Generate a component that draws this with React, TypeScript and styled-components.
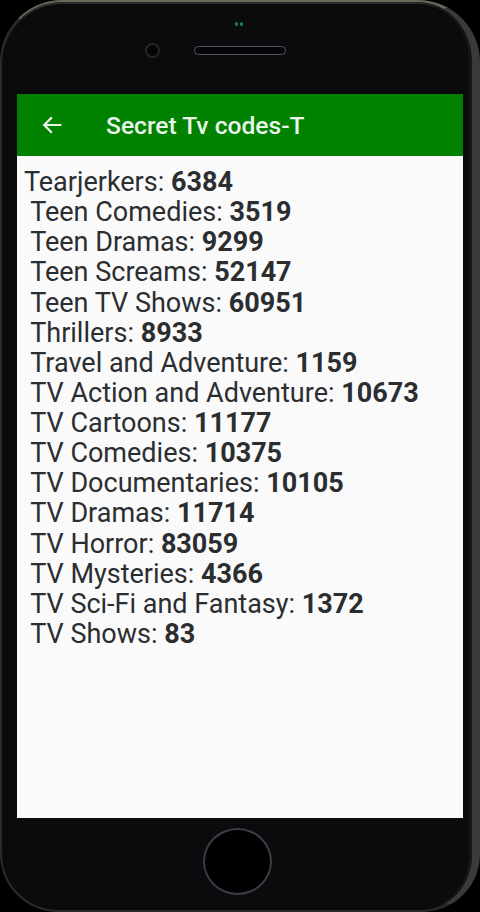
import styled, { createGlobalStyle } from 'styled-components'

const codes: [string, string][] = [
  ['Tearjerkers', '6384'],
  [' Teen Comedies', '3519'],
  [' Teen Dramas', '9299'],
  [' Teen Screams', '52147'],
  [' Teen TV Shows', '60951'],
  [' Thrillers', '8933'],
  [' Travel and Adventure', '1159'],
  [' TV Action and Adventure', '10673'],
  [' TV Cartoons', '11177'],
  [' TV Comedies', '10375'],
  [' TV Documentaries', '10105'],
  [' TV Dramas', '11714'],
  [' TV Horror', '83059'],
  [' TV Mysteries', '4366'],
  [' TV Sci-Fi and Fantasy', '1372'],
  [' TV Shows', '83'],
]

const GlobalStyle = createGlobalStyle`
  html, body {
    margin: 0;
    padding: 0;
    background: #000;
  }
  * {
    box-sizing: border-box;
  }
`

export default function App() {
  return (
    <>
      <GlobalStyle />
      <PhoneBody>
        <TopBezel>
          <SensorDots>
            <Dot />
            <Dot />
          </SensorDots>
          <EarRow>
            <Camera />
            <Speaker />
          </EarRow>
        </TopBezel>
        <Screen>
          <AppBar>
            <BackButton aria-label="back">
              <svg width="22" height="22" viewBox="0 0 24 24" fill="none" stroke="#e9f5e9" strokeWidth="2.4" strokeLinecap="square">
                <path d="M21 12H4" />
                <path d="M11 4.5 3.5 12l7.5 7.5" />
              </svg>
            </BackButton>
            <Title>Secret Tv codes-T</Title>
          </AppBar>
          <CodeList>
            {codes.map(([name, code]) => (
              <CodeRow key={name}>
                {name}: <b>{code}</b>
              </CodeRow>
            ))}
          </CodeList>
        </Screen>
        <BottomBezel>
          <HomeButton />
        </BottomBezel>
      </PhoneBody>
    </>
  )
}

const PhoneBody = styled.div`
  width: 480px;
  height: 912px;
  display: flex;
  flex-direction: column;
  background: #0b0b0d;
  border-radius: 62px 62px 58px 58px;
  border: 2px solid #2a2a2c;
  border-top-color: #6a6658;
  border-right: 8px solid #3a3a3c;
  box-shadow: inset -3px 0 0 #151517, inset 0 2px 0 #2c2c2e;
  overflow: hidden;
`
const TopBezel = styled.div`
  height: 92px;
  display: flex;
  flex-direction: column;
  align-items: center;
  padding-top: 20px;
`
const SensorDots = styled.div`
  display: flex;
  gap: 2px;
  margin-left: 3px;
`
const Dot = styled.span`
  width: 3px;
  height: 4px;
  border-radius: 2px;
  background: #1f7a55;
`
const EarRow = styled.div`
  display: flex;
  align-items: center;
  gap: 34px;
  margin-top: 17px;
  margin-left: -43px;
`
const Camera = styled.div`
  width: 15px;
  height: 15px;
  border-radius: 50%;
  background: #050506;
  border: 2px solid #26262a;
`
const Speaker = styled.div`
  width: 92px;
  height: 9px;
  border-radius: 5px;
  background: #050507;
  border: 1.5px solid #5a5468;
`
const Screen = styled.div`
  height: 724px;
  margin: 0 9px 0 15px;
  background: #fafafa;
  display: flex;
  flex-direction: column;
`
const AppBar = styled.div`
  height: 62px;
  background: #008200;
  display: flex;
  align-items: center;
  padding-left: 24px;
  gap: 43px;
`
const BackButton = styled.div`
  display: flex;
  align-items: center;
`
const Title = styled.div`
  font-family: Roboto, 'Liberation Sans', sans-serif;
  font-size: 24.6px;
  font-weight: 500;
  color: #e9f5e9;
`
const CodeList = styled.div`
  padding: 11px 0 0 7px;
`
const CodeRow = styled.div`
  font-family: Roboto, 'Liberation Sans', sans-serif;
  font-size: 27px;
  line-height: 30.13px;
  color: #2b2e31;
  white-space: pre;
  b {
    font-weight: 700;
  }
`
const BottomBezel = styled.div`
  flex: 1;
  display: flex;
  justify-content: center;
  padding-top: 10px;
`
const HomeButton = styled.div`
  width: 69px;
  height: 67px;
  border-radius: 50%;
  background: #000;
  border: 2px solid #3c3c48;
`
